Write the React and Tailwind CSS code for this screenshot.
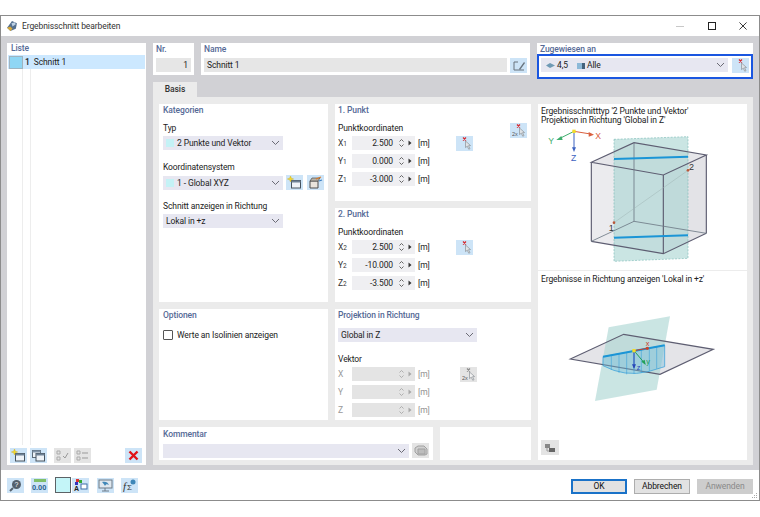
import React from 'react';

const Chevron = ({ light }) => (
    <svg width="9" height="6" viewBox="0 0 9 6" className="shrink-0">
        <path d="M1 1l3.5 3.5L8 1" fill="none" stroke={light ? '#9a9aa4' : '#6b6b75'} strokeWidth="1" />
    </svg>
);

const Swatch = () => <span className="w-[8px] h-[8px] bg-[#c4f2f6] shrink-0" />;

const Dropdown = ({ width, swatch, children }) => (
    <div className={`${width} h-[14px] bg-[#e7e7f1] flex items-center pl-[3px] pr-[3px] gap-[3px] text-[8.5px] shrink-0`}>
        {swatch && <Swatch />}
        <span className="flex-1 whitespace-nowrap text-[#1d1d1d] flex items-center gap-[4px] pt-px">{children}</span>
        <Chevron />
    </div>
);

const Heading = ({ children }) => <div className="text-[8.5px] leading-[12px] text-[#566a96] font-medium">{children}</div>;

const IconButton = ({ gray, children, className = 'w-[17px] h-[15px]' }) => (
    <div className={`${className} ${gray ? 'bg-[#e4e4e4]' : 'bg-[#cde4f7]'} flex items-center justify-center shrink-0`}>
        {children}
    </div>
);

const PickIcon = ({ two, gray }) => (
    <svg width="14" height="13" viewBox="0 0 14 13">
        <path d="M5 0.5l3 3M8 0.5l-3 3" stroke={gray ? '#8a8a8a' : '#d8262c'} strokeWidth="1.2" />
        <path d="M7.5 4l5 4.5-2 .2 1.5 3-1.3.5-1.4-3-1.8 1.4z" fill={gray ? '#f2f2f2' : '#dfe3e7'} stroke="#8b9096" strokeWidth=".7" />
        {two && <text x="0" y="12" fontSize="5.5" fill="#555" fontFamily="Liberation Sans, sans-serif">2x</text>}
    </svg>
);

const NewIcon = ({ copy }) => (
    <svg width="15" height="13" viewBox="0 0 15 13">
        {copy ? (
            <>
                <rect x="1.5" y="1.5" width="8" height="7" fill="#eef3f8" stroke="#5d6b78" />
                <rect x="1.5" y="1.5" width="8" height="2" fill="#7f93a8" />
                <rect x="5" y="4.5" width="8.5" height="7.5" fill="#eef3f8" stroke="#46525e" />
                <rect x="5" y="4.5" width="8.5" height="2" fill="#6e8296" />
            </>
        ) : (
            <>
                <rect x="4.5" y="4.5" width="9" height="7.5" fill="#eef3f8" stroke="#46525e" />
                <rect x="4.5" y="4.5" width="9" height="2" fill="#6e8296" />
                <path d="M3.5 0l.8 2.2L6.6 3l-2.3.8L3.5 6l-.8-2.2L.4 3l2.3-.8z" fill="#f5d92a" stroke="#c9a90f" strokeWidth=".4" />
            </>
        )}
    </svg>
);

const CoordIcon = () => (
    <svg width="15" height="13" viewBox="0 0 15 13">
        <path d="M2 5h8v7H2z" fill="#e9e4dc" stroke="#4d4d4d" />
        <path d="M2 5l2-3h8l-2 3z" fill="#b9b2a6" stroke="#4d4d4d" strokeWidth=".7" />
        <path d="M8 3l5-2" stroke="#d77a2a" strokeWidth="1.2" />
        <path d="M11 5l3-1" stroke="#3c7fc4" strokeWidth="1.2" />
    </svg>
);

const Spinner = ({ muted }) => (
    <div className="flex items-center shrink-0 gap-[4px] ml-[6px]">
        <svg width="5" height="10" viewBox="0 0 5 10">
            <path d="M.5 3.5L2.5 1.5l2 2M.5 6.5L2.5 8.5l2-2" fill="none" stroke={muted ? '#a8a8a8' : '#555'} strokeWidth=".9" />
        </svg>
        <svg width="4" height="6" viewBox="0 0 4 6">
            <path d="M.5 .5L3.5 3 .5 5.5z" fill={muted ? '#a8a8a8' : '#333'} />
        </svg>
    </div>
);

const CoordRow = ({ axis, sub, value, muted, button }) => (
    <div className="h-[14px] flex items-center">
        <span className={`w-[14px] text-[8.5px] pt-px whitespace-nowrap ${muted ? 'text-[#9a9a9a]' : 'text-[#333]'}`}>
            {axis}
            {sub && <span className="text-[6.5px]">{sub}</span>}
        </span>
        <div className={`w-[63px] h-[14px] ${muted ? 'bg-[#e4e4e4]' : 'bg-[#efeff2]'} flex items-center justify-end pr-[3px] text-[8.5px] text-[#222]`}>
            <span className="pt-px">{value}</span>
            <Spinner muted={muted} />
        </div>
        <span className={`ml-[3px] w-[38px] pt-px text-[8.5px] ${muted ? 'text-[#8f8f8f]' : 'text-[#222]'}`}>[m]</span>
        {button}
    </div>
);

const CubeDrawing = () => (
    <svg width="209" height="145" viewBox="10 75 627 435" className="block">
        <path d="M170 187L298 128L515 165L386 225Z" fill="#e6e6ea" />
        <path d="M170 187L386 225V461L170 424Z" fill="#ebebee" />
        <path d="M386 225L515 165V400L386 461Z" fill="#e3e3e7" />
        <path d="M238 118L460 110V475L238 484Z" fill="#a9d5d2" fillOpacity=".62" stroke="#7fbcb8" strokeWidth="2" strokeDasharray="6 4" />
        <g fill="none" stroke="#5e5e72" strokeWidth="3.5">
            <path d="M170 187L298 128L515 165L386 225Z" />
            <path d="M170 187V424M386 225V461M515 165V400" />
            <path d="M170 424L386 461L515 400" />
        </g>
        <g fill="none" stroke="#6d7a86" strokeWidth="2.5">
            <path d="M298 128V364M170 424L298 364L515 400" />
        </g>
        <path d="M238 368L460 211" stroke="#9fb5b5" strokeWidth="1.5" />
        <path d="M238 177L460 170M238 413L460 406" stroke="#1b95d6" strokeWidth="6" />
        <circle cx="238" cy="368" r="4" fill="#b8583a" />
        <circle cx="460" cy="211" r="4" fill="#b8583a" />
        <text x="222" y="392" fontSize="27" fill="#333" fontFamily="Liberation Sans, sans-serif">1</text>
        <text x="463" y="210" fontSize="27" fill="#333" fontFamily="Liberation Sans, sans-serif">2</text>
        <path d="M118 94L168 102" stroke="#d9603f" strokeWidth="3" />
        <path d="M178 104L162 96V110Z" fill="#d9603f" />
        <path d="M118 94L74 116" stroke="#3fae6d" strokeWidth="3" />
        <path d="M65 120L80 108L84 120Z" fill="#3fae6d" />
        <path d="M118 94V144" stroke="#3c62c0" strokeWidth="3" />
        <path d="M118 156L112 142H124Z" fill="#3c62c0" />
        <rect x="113" y="89" width="10" height="10" fill="#f2dc2a" />
        <text x="182" y="116" fontSize="26" fill="#d9603f" fontFamily="Liberation Sans, sans-serif">X</text>
        <text x="41" y="132" fontSize="26" fill="#3fae6d" fontFamily="Liberation Sans, sans-serif">Y</text>
        <text x="109" y="182" fontSize="26" fill="#3c62c0" fontFamily="Liberation Sans, sans-serif">Z</text>
    </svg>
);

const ResultDrawing = () => (
    <svg width="209" height="154" viewBox="10 48 627 462" className="block">
        <path d="M107 270L267 196L536 241L376 316Z" fill="#e4e4e8" />
        <path d="M222 175L406 142L366 362L181 396Z" fill="#a9d5d2" fillOpacity=".62" />
        <path d="M107 270L267 196L536 241L376 316Z" fill="none" stroke="#5e5e72" strokeWidth="3.5" />
        <path d="M205 263L390 229V293L340 308Q270 325 205 290Z" fill="#6dbbdc" fillOpacity=".4" stroke="#2c9ad8" strokeWidth="2" />
        <path d="M230 259V303M253 255V312M276 250V316M298 246V315M320 242V311M344 238V306M366 233V299" stroke="#2c9ad8" strokeWidth="1.5" />
        <path d="M205 263L390 229" stroke="#1b95d6" strokeWidth="6" />
        <path d="M298 245L338 238" stroke="#c9432c" strokeWidth="3" />
        <circle cx="338" cy="238" r="5" fill="#c9432c" />
        <path d="M298 245L330 283" stroke="#22a05a" strokeWidth="3" />
        <path d="M333 288L320 278L330 272Z" fill="#22a05a" />
        <path d="M298 245V296" stroke="#2747b8" strokeWidth="3" />
        <path d="M298 300L292 286H304Z" fill="#2747b8" />
        <rect x="293" y="240" width="10" height="10" fill="#f2dc2a" />
        <text x="333" y="232" fontSize="22" fill="#c9432c" fontFamily="Liberation Sans, sans-serif">x</text>
        <text x="335" y="286" fontSize="22" fill="#22a05a" fontFamily="Liberation Sans, sans-serif">y</text>
        <text x="306" y="302" fontSize="22" fill="#2747b8" fontFamily="Liberation Sans, sans-serif">z</text>
    </svg>
);

const DialogButton = ({ children, primary, disabled }) => (
    <div
        className={`w-[56px] h-[15px] flex items-center justify-center text-[8.5px] leading-none ${
            primary ? 'border-2 border-[#1a72c8] bg-[#e2e2e2] text-[#111]' : disabled ? 'border border-[#cdcdcd] bg-[#cdcdcd] text-[#8a8a8a]' : 'border border-[#adadad] bg-[#e2e2e2] text-[#111]'
        }`}
    >
        {children}
    </div>
);

export default function App() {
    return (
        <div className="w-[760px] h-[517px] bg-white pt-[15px] overflow-hidden font-['Roboto',sans-serif] tracking-[-0.1px] text-[#222]">
            <div className="relative h-[486px] border border-[#8c8c8c] flex flex-col">
                <div className="h-[20px] flex items-center pl-[5px] shrink-0">
                    <svg width="12" height="12" viewBox="0 0 11 11" className="mr-[4px]">
                        <path d="M5.5 1L10 3 9 8 4 10 1 7z" fill="#54708f" />
                        <path d="M1 7l3 3 2-2-2-2z" fill="#d9a93a" />
                        <path d="M5 3l3-1 1 2-3 2z" fill="#bcd0e4" />
                    </svg>
                    <span className="text-[8.5px] text-[#333]">Ergebnisschnitt bearbeiten</span>
                    <div className="ml-auto flex items-center">
                        <span className="w-[8px] h-px bg-[#c8c8c8] mr-[24px]" />
                        <span className="w-[8px] h-[8px] border border-[#222] mr-[23px]" />
                        <svg width="8" height="8" viewBox="0 0 9 9" className="mr-[12px]">
                            <path d="M.5.5l8 8M8.5.5l-8 8" stroke="#222" strokeWidth="1" />
                        </svg>
                    </div>
                </div>

                <div className="h-[434px] bg-[#d1d1d5] flex gap-[7px] pl-[6px] pr-[6px] pt-[7px] pb-[5px] shrink-0">
                    {/* Liste */}
                    <div className="w-[139px] bg-white flex flex-col px-px pb-[2px]">
                        <div className="text-[8.5px] leading-[11px] text-[#566a96] font-medium pl-[3px] mb-px">Liste</div>
                        <div className="h-[14px] bg-[#cce8ff] flex items-center">
                            <span className="w-[14px] h-[13px] bg-[#8fd6f4] border border-[#9fb4c0] ml-px" />
                            <span className="text-[8.5px] ml-[2px] font-medium">1</span>
                            <span className="text-[8.5px] ml-[4px]">Schnitt 1</span>
                        </div>
                        <div className="flex-1 ml-[14px] flex pb-[3px]">
                            <div className="w-[9px] border-x border-[#ededed]" />
                        </div>
                        <div className="flex items-center pl-[2px] pr-[3px] h-[15px]">
                            <IconButton><NewIcon /></IconButton>
                            <IconButton className="w-[17px] h-[15px] ml-[3px]"><NewIcon copy /></IconButton>
                            <IconButton gray className="w-[17px] h-[15px] ml-[7px]">
                                <svg width="13" height="11" viewBox="0 0 13 11"><path d="M1 1h3v3H1zM1 7h3v3H1z" fill="none" stroke="#aaa" /><path d="M7 6l2 2 3-5" fill="none" stroke="#999" /></svg>
                            </IconButton>
                            <IconButton gray className="w-[17px] h-[15px] ml-[3px]">
                                <svg width="13" height="11" viewBox="0 0 13 11"><path d="M1 1h3v3H1zM1 7h3v3H1z" fill="none" stroke="#aaa" /><path d="M6 3h6M6 8h6" stroke="#999" /></svg>
                            </IconButton>
                            <IconButton className="w-[17px] h-[15px] ml-auto">
                                <svg width="11" height="11" viewBox="0 0 11 11"><path d="M1.5 1.5l8 8M9.5 1.5l-8 8" stroke="#e01218" strokeWidth="2.4" /></svg>
                            </IconButton>
                        </div>
                    </div>

                    {/* Rechte Seite */}
                    <div className="w-[600px] flex flex-col">
                        <div className="h-[32px] flex gap-[7px] shrink-0">
                            <div className="w-[41px] bg-white px-[3px]">
                                <Heading>Nr.</Heading>
                                <div className="h-[14px] mt-[3px] pt-px bg-[#e6e6e6] text-[8.5px] flex items-center justify-end pr-[3px]">1</div>
                            </div>
                            <div className="w-[329px] bg-white px-[3px]">
                                <Heading>Name</Heading>
                                <div className="flex gap-[3px] mt-[3px]">
                                    <div className="w-[303px] h-[14px] pt-px bg-[#e6e6e6] text-[8.5px] flex items-center pl-[3px]">Schnitt 1</div>
                                    <IconButton>
                                        <svg width="14" height="12" viewBox="0 0 14 12"><path d="M2 2h4M2 2v8M2 10h10" fill="none" stroke="#68737d" /><path d="M7 9l5-7 1 1-5 7z" fill="#68737d" /></svg>
                                    </IconButton>
                                </div>
                            </div>
                            <div className="w-[216px] bg-white">
                                <div className="pl-[3px]"><Heading>Zugewiesen an</Heading></div>
                                <div className="h-[25px] -mt-px border-2 border-[#1a56e0] bg-white flex items-start pt-[2px] pl-[2px] pr-[2px] gap-[4px]">
                                    <div className="w-[187px] h-[14px] bg-[#e7e7f1] flex items-center pl-[5px] pr-[3px] text-[8.5px]">
                                        <svg width="9" height="7" viewBox="0 0 9 7" className="mr-[2px]"><path d="M0 3.5L4 1l5 2.5L4 6z" fill="#6f9ab5" /></svg>
                                        <span className="pt-px">4,5</span>
                                        <svg width="8" height="7" viewBox="0 0 8 7" className="ml-[9px] mr-[2px]"><path d="M0 1h5v6H0z" fill="#8db9d8" /><path d="M5 1h3v6H5z" fill="#44627c" /></svg>
                                        <span className="pt-px">Alle</span>
                                        <span className="ml-auto"><Chevron /></span>
                                    </div>
                                    <IconButton><PickIcon /></IconButton>
                                </div>
                            </div>
                        </div>

                        <div className="h-[15px] mt-[7px] shrink-0">
                            <div className="w-[44px] h-[15px] bg-[#ebebeb] text-[8.5px] flex items-center justify-center font-medium text-[#333]">Basis</div>
                        </div>

                        <div className="h-[368px] bg-[#ebebeb] flex pl-[6px] pt-[7px] gap-[7px]">
                            <div className="w-[372px] flex flex-col gap-[7px]">
                                <div className="flex gap-[7px] h-[198px]">
                                    {/* Kategorien */}
                                    <div className="w-[169px] bg-white pl-[4px] flex flex-col">
                                        <Heading>Kategorien</Heading>
                                        <div className="text-[8.5px] leading-[12px] mt-[6px] mb-[2px]">Typ</div>
                                        <Dropdown width="w-[120px]" swatch>2 Punkte und Vektor</Dropdown>
                                        <div className="text-[8.5px] leading-[12px] mt-[11px] mb-[2px]">Koordinatensystem</div>
                                        <div className="flex items-center">
                                            <Dropdown width="w-[120px]" swatch>1 - Global XYZ</Dropdown>
                                            <IconButton className="w-[17px] h-[15px] ml-[3px]"><NewIcon /></IconButton>
                                            <IconButton className="w-[17px] h-[15px] ml-[4px]"><CoordIcon /></IconButton>
                                        </div>
                                        <div className="text-[8.5px] leading-[12px] mt-[10px] mb-[2px]">Schnitt anzeigen in Richtung</div>
                                        <Dropdown width="w-[120px]">Lokal in +z</Dropdown>
                                    </div>
                                    <div className="w-[196px] flex flex-col gap-[7px]">
                                        <div className="h-[97px] bg-white pl-[3px] pr-[4px]">
                                            <Heading>1. Punkt</Heading>
                                            <div className="flex h-[15px] items-start mt-[7px]">
                                                <div className="text-[8.5px] leading-[12px] -mt-px">Punktkoordinaten</div>
                                                <IconButton className="w-[17px] h-[15px] ml-auto"><PickIcon two /></IconButton>
                                            </div>
                                            <div className="flex flex-col gap-[4px] -mt-[2px]">
                                                <CoordRow axis="X" sub="1" value="2.500" button={<IconButton className="w-[17px] h-[15px]"><PickIcon /></IconButton>} />
                                                <CoordRow axis="Y" sub="1" value="0.000" />
                                                <CoordRow axis="Z" sub="1" value="-3.000" />
                                            </div>
                                        </div>
                                        <div className="h-[94px] bg-white pl-[3px]">
                                            <Heading>2. Punkt</Heading>
                                            <div className="text-[8.5px] leading-[12px] mt-[6px] mb-[2px]">Punktkoordinaten</div>
                                            <div className="flex flex-col gap-[4px]">
                                                <CoordRow axis="X" sub="2" value="2.500" button={<IconButton className="w-[17px] h-[15px]"><PickIcon /></IconButton>} />
                                                <CoordRow axis="Y" sub="2" value="-10.000" />
                                                <CoordRow axis="Z" sub="2" value="-3.500" />
                                            </div>
                                        </div>
                                    </div>
                                </div>

                                <div className="flex gap-[7px] h-[111px]">
                                    <div className="w-[169px] bg-white pl-[4px]">
                                        <Heading>Optionen</Heading>
                                        <label className="flex items-center mt-[8px] text-[8.5px]">
                                            <span className="w-[10px] h-[10px] border border-[#555] rounded-[1px] mr-[4px]" />
                                            Werte an Isolinien anzeigen
                                        </label>
                                    </div>
                                    <div className="w-[196px] bg-white pl-[3px]">
                                        <Heading>Projektion in Richtung</Heading>
                                        <div className="mt-[7px]"><Dropdown width="w-[139px]">Global in Z</Dropdown></div>
                                        <div className="text-[8.5px] leading-[12px] mt-[11px] mb-[2px]">Vektor</div>
                                        <div className="flex flex-col gap-[4px]">
                                            <CoordRow axis="X" muted value="" button={<IconButton gray className="w-[17px] h-[15px] ml-[4px]"><PickIcon two gray /></IconButton>} />
                                            <CoordRow axis="Y" muted value="" />
                                            <CoordRow axis="Z" muted value="" />
                                        </div>
                                    </div>
                                </div>

                                <div className="flex gap-[7px] h-[33px]">
                                    <div className="w-[274px] bg-white pl-[4px] pt-px">
                                        <Heading>Kommentar</Heading>
                                        <div className="flex items-center mt-[3px]">
                                            <Dropdown width="w-[246px]"></Dropdown>
                                            <IconButton gray className="w-[17px] h-[15px] ml-[3px]">
                                                <svg width="14" height="11" viewBox="0 0 14 11"><path d="M1 3l3-2h6l3 3v5l-2 1H4L1 7z" fill="#d0d0d0" stroke="#a0a0a0" /><path d="M4 4h7v5H4z" fill="#bdbdbd" stroke="#a0a0a0" /></svg>
                                            </IconButton>
                                        </div>
                                    </div>
                                    <div className="w-[91px] bg-white" />
                                </div>
                            </div>

                            {/* Vorschau */}
                            <div className="w-[209px] h-[356px] bg-white flex flex-col">
                                <div className="text-[8.5px] leading-[9px] pl-[3px] pt-[3px] h-[21px] whitespace-nowrap">
                                    <div>Ergebnisschnitttyp '2 Punkte und Vektor'</div>
                                    <div>Projektion in Richtung 'Global in Z'</div>
                                </div>
                                <CubeDrawing />
                                <div className="h-px bg-[#ececec]" />
                                <div className="text-[8.5px] leading-[12px] pl-[3px] pt-[2px] h-[14px] whitespace-nowrap">Ergebnisse in Richtung anzeigen 'Lokal in +z'</div>
                                <ResultDrawing />
                                <div className="pl-[3px] pt-[1px]">
                                    <IconButton gray className="w-[18px] h-[15px]">
                                        <svg width="13" height="12" viewBox="0 0 13 12"><path d="M1 2h5v4H1z" fill="#888" /><path d="M5 6h6v4H5z" fill="#666" /><path d="M3 6v3h2" fill="none" stroke="#999" /></svg>
                                    </IconButton>
                                </div>
                            </div>
                        </div>
                    </div>
                </div>

                <div className="flex-1 flex items-center pl-[6px] pr-[6px]">
                    <IconButton>
                        <svg width="13" height="13" viewBox="0 0 13 13"><circle cx="7.5" cy="5.5" r="4.5" fill="#54606c" /><path d="M4 9l-3 3" stroke="#54606c" strokeWidth="2" /><text x="5.6" y="8" fontSize="7" fill="#fff" fontFamily="Liberation Sans, sans-serif">?</text></svg>
                    </IconButton>
                    <IconButton className="w-[17px] h-[15px] ml-[7px]">
                        <svg width="15" height="13" viewBox="0 0 15 13"><rect x="2" y="0" width="12" height="3" fill="#7fbf6a" /><text x="0" y="11" fontSize="7.5" fill="#2b5f8f" fontWeight="700" fontFamily="Liberation Sans, sans-serif">0.00</text></svg>
                    </IconButton>
                    <span className="w-[16px] h-[16px] bg-[#c4f5f8] border border-[#5c6266] ml-[7px]" />
                    <IconButton className="w-[17px] h-[15px] ml-[1px]">
                        <svg width="15" height="13" viewBox="0 0 15 13"><rect x="3" y="0" width="3" height="3" fill="#d33" /><rect x="6" y="1" width="3" height="3" fill="#3a3" /><rect x="2" y="3" width="3" height="3" fill="#33b" /><text x="1" y="12" fontSize="7" fill="#222" fontWeight="700" fontFamily="Liberation Sans, sans-serif">A</text><rect x="8" y="5" width="6" height="5" fill="#fff" stroke="#3f6fa8" /></svg>
                    </IconButton>
                    <IconButton className="w-[17px] h-[15px] ml-[8px]">
                        <svg width="15" height="13" viewBox="0 0 15 13"><rect x="1" y="1" width="13" height="8" fill="#dfe8ef" stroke="#6d7b88" /><path d="M4 3c3-1 6 0 7 3-2-1-3-1-4 1-1-2-2-3-3-4z" fill="#3f87b8" /><path d="M7 9v3M4 12h7" stroke="#6d7b88" /></svg>
                    </IconButton>
                    <IconButton className="w-[17px] h-[15px] ml-[7px]">
                        <svg width="15" height="13" viewBox="0 0 15 13"><text x="1" y="11" fontSize="11" fontStyle="italic" fill="#333" fontFamily="Liberation Serif, serif">f</text><text x="5" y="11" fontSize="8" fill="#333" fontFamily="Liberation Sans, sans-serif">Σ</text><circle cx="11" cy="3" r="2.5" fill="#3f87b8" /></svg>
                    </IconButton>
                    <div className="ml-auto flex gap-[7px] mt-[2px]">
                        <DialogButton primary>OK</DialogButton>
                        <DialogButton>Abbrechen</DialogButton>
                        <DialogButton disabled>Anwenden</DialogButton>
                    </div>
                </div>
                <svg width="7" height="7" viewBox="0 0 7 7" className="absolute right-[1px] bottom-[1px]">
                    <path d="M5 1h1v1H5zM3 3h1v1H3zM5 3h1v1H5zM1 5h1v1H1zM3 5h1v1H3zM5 5h1v1H5z" fill="#a8a8a8" />
                </svg>
            </div>
        </div>
    );
}
